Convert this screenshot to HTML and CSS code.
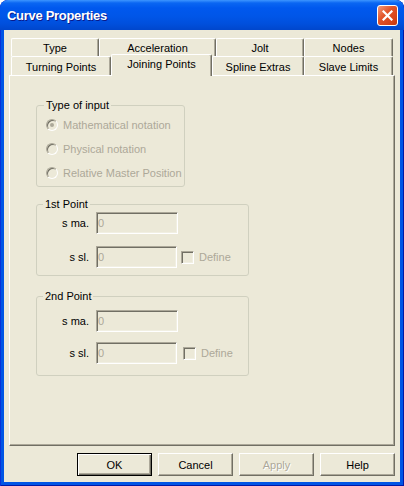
FILE: index.html
```html
<!DOCTYPE html>
<html>
<head>
<meta charset="utf-8">
<link rel="stylesheet" href="styles.css">
</head>
<body>
<div class="window">
  <div class="titlebar">
    <span class="title">Curve Properties</span>
    <span class="close"><svg width="11" height="11" viewBox="0 0 11 11"><path d="M1.5 1.5 L9.5 9.5 M9.5 1.5 L1.5 9.5" stroke="#fff" stroke-width="2.2" stroke-linecap="square"/></svg></span>
  </div>
  <div class="client">
    <div class="tabs">
      <div class="tabrow row1">
        <div class="tab t-type">Type</div>
        <div class="tab t-acc">Acceleration</div>
        <div class="tab t-jolt">Jolt</div>
        <div class="tab t-nodes">Nodes</div>
      </div>
      <div class="tabrow row2">
        <div class="tab t-turn">Turning Points</div>
        <div class="tab t-join selected">Joining Points</div>
        <div class="tab t-spline">Spline Extras</div>
        <div class="tab t-slave">Slave Limits</div>
      </div>
    </div>
    <div class="panel">
      <fieldset class="group g-input">
        <legend>Type of input</legend>
        <label class="radio"><span class="rb checked"></span>Mathematical notation</label>
        <label class="radio"><span class="rb"></span>Physical notation</label>
        <label class="radio"><span class="rb"></span>Relative Master Position</label>
      </fieldset>
      <fieldset class="group g-point g-first">
        <legend>1st Point</legend>
        <div class="row"><span class="lbl">s ma.</span><input class="field" value="0" disabled></div>
        <div class="row row-sl"><span class="lbl">s sl.</span><input class="field" value="0" disabled><span class="cb"></span><span class="cbtext">Define</span></div>
      </fieldset>
      <fieldset class="group g-point g-second">
        <legend>2nd Point</legend>
        <div class="row"><span class="lbl">s ma.</span><input class="field" value="0" disabled></div>
        <div class="row row-sl"><span class="lbl">s sl.</span><input class="field" value="0" disabled><span class="cb"></span><span class="cbtext">Define</span></div>
      </fieldset>
    </div>
    <div class="buttons">
      <button class="btn default">OK</button>
      <button class="btn">Cancel</button>
      <button class="btn disabled">Apply</button>
      <button class="btn">Help</button>
    </div>
  </div>
</div>
</body>
</html>
```

FILE: styles.css
```css
* { box-sizing: border-box; }
body {
  margin: 0;
  font-family: "Liberation Sans", Arial, sans-serif;
  font-size: 11px;
  color: #000;
}
.window {
  width: 404px;
  height: 486px;
  background: #0055E5;
  border-radius: 8px 8px 0 0;
  display: flex;
  flex-direction: column;
  overflow: hidden;
  box-shadow: inset 1px 0 #0831D9, inset -1px 0 #0019A8, inset 0 -1px #0019A8;
}
.titlebar {
  height: 30px;
  flex: none;
  display: flex;
  align-items: center;
  justify-content: space-between;
  padding: 0 6px 0 7px;
  background: linear-gradient(#3D95FF 0, #0A66F2 3px, #0058EE 8px, #0056E8 16px, #004FDC 24px, #0046CC 30px);
  border-radius: 8px 8px 0 0;
}
.title {
  color: #fff;
  font-weight: bold;
  font-size: 13px;
  letter-spacing: -0.3px;
  text-shadow: 1px 1px #0A1A8A;
  padding-top: 1px;
}
.close {
  width: 21px;
  height: 21px;
  border: 1px solid #fff;
  border-radius: 3px;
  background: linear-gradient(135deg, #F29A7B 0, #E2552B 40%, #D8441A 75%, #C2380F 100%);
  display: flex;
  align-items: center;
  justify-content: center;
}
.close svg { display: block; }
.client {
  flex: 1;
  margin: 0 4px 4px;
  background: #ECE9D8;
  padding: 8px 5px 0;
}
.tabs { margin-left: 2px; }
.tabrow {
  display: flex;
  align-items: flex-end;
}
.row1 { height: 18px; }
.row2 { height: 19px; position: relative; z-index: 2; }
.tab {
  display: flex;
  align-items: center;
  justify-content: center;
  background: #ECE9D8;
  border-top: 1px solid #fff;
  border-left: 1px solid #fff;
  border-right: 1px solid #716F64;
  box-shadow: inset -1px 0 #ACA899;
  border-radius: 2px 2px 0 0;
  padding-top: 1px;
}
.row1 .tab { height: 18px; }
.row2 .tab { height: 19px; }
.t-type { width: 88px; }
.t-acc { width: 117px; }
.t-jolt { width: 88px; }
.t-nodes { width: 89px; }
.t-turn { width: 100px; }
.t-join { width: 101px; }
.t-spline { width: 92px; }
.t-slave { width: 89px; }
.row2 .tab.selected {
  height: 22px;
  margin-bottom: -1px;
  padding-top: 0;
  padding-bottom: 4px;
}
.panel {
  height: 371px;
  border-top: 1px solid #fff;
  border-left: 1px solid #fff;
  border-right: 1px solid #716F64;
  border-bottom: 1px solid #716F64;
  box-shadow: inset -1px -1px #ACA899;
  padding: 23px 0 0 26px;
  position: relative;
  z-index: 1;
}
.group {
  margin: 0;
  min-width: 0;
  border: 1px solid #D0D0BF;
  border-radius: 3px;
}
.group legend {
  padding: 0 2px;
  line-height: 13px;
  font-size: 11px;
}
.g-input {
  width: 149px;
  padding: 1px 0 1px 9px;
}
.g-input legend { margin-left: -2px; }
.radio {
  display: flex;
  align-items: center;
  height: 24px;
  gap: 5px;
  color: #ACA899;
  white-space: nowrap;
}
.rb {
  width: 12px;
  height: 12px;
  flex: none;
  border-radius: 50%;
  border: 1px solid;
  border-color: #ACA899 #fff #fff #ACA899;
  background: #ECE9D8;
  box-shadow: inset 1px 1px #716F64;
  display: flex;
  align-items: center;
  justify-content: center;
}
.rb.checked::after {
  content: "";
  width: 4px;
  height: 4px;
  border-radius: 50%;
  background: #ACA899;
}
.g-point {
  width: 213px;
  padding: 1px 0 7px 0;
}
.g-point legend { margin-left: 6px; }
.g-first { margin-top: 11px; }
.g-second { margin-top: 14px; padding-top: 7px; padding-bottom: 11px; }
.row {
  display: flex;
  align-items: center;
}
.row-sl { margin-top: 12px; }
.g-second .row-sl { margin-top: 10px; }
.lbl {
  width: 52px;
  text-align: right;
  margin-right: 7px;
}
.field {
  width: 82px;
  height: 22px;
  margin: 0;
  padding: 0 0 0 1px;
  font-family: inherit;
  font-size: 11px;
  background: #ECE9D8;
  color: #ACA899;
  -webkit-text-fill-color: #ACA899;
  opacity: 1;
  border: 1px solid;
  border-color: #ACA899 #fff #fff #ACA899;
  box-shadow: inset 1px 1px #716F64, inset -1px -1px #F1EFE2;
  outline: none;
}
.row-sl .field { width: 81px; }
.cb {
  width: 13px;
  height: 13px;
  flex: none;
  margin-left: 4px;
  border: 1px solid;
  border-color: #ACA899 #fff #fff #ACA899;
  box-shadow: inset 1px 1px #716F64, inset -1px -1px #F1EFE2;
  background: #ECE9D8;
}
.g-second .cb { margin-left: 6px; }
.cbtext {
  margin-left: 5px;
  color: #ACA899;
}
.buttons {
  display: flex;
  justify-content: flex-end;
  gap: 6px;
  margin-top: 7px;
}
.btn {
  width: 75px;
  height: 23px;
  margin: 0;
  padding: 0;
  font-family: inherit;
  font-size: 11px;
  color: #000;
  background: #ECE9D8;
  border: 1px solid;
  border-color: #fff #716F64 #716F64 #fff;
  box-shadow: inset -1px -1px #ACA899;
}
.btn.default {
  border: 1px solid #000;
  box-shadow: inset 1px 1px #fff, inset -1px -1px #716F64, inset -2px -2px #ACA899;
}
.btn.disabled {
  color: #ACA899;
  text-shadow: 1px 1px #fff;
}
```
